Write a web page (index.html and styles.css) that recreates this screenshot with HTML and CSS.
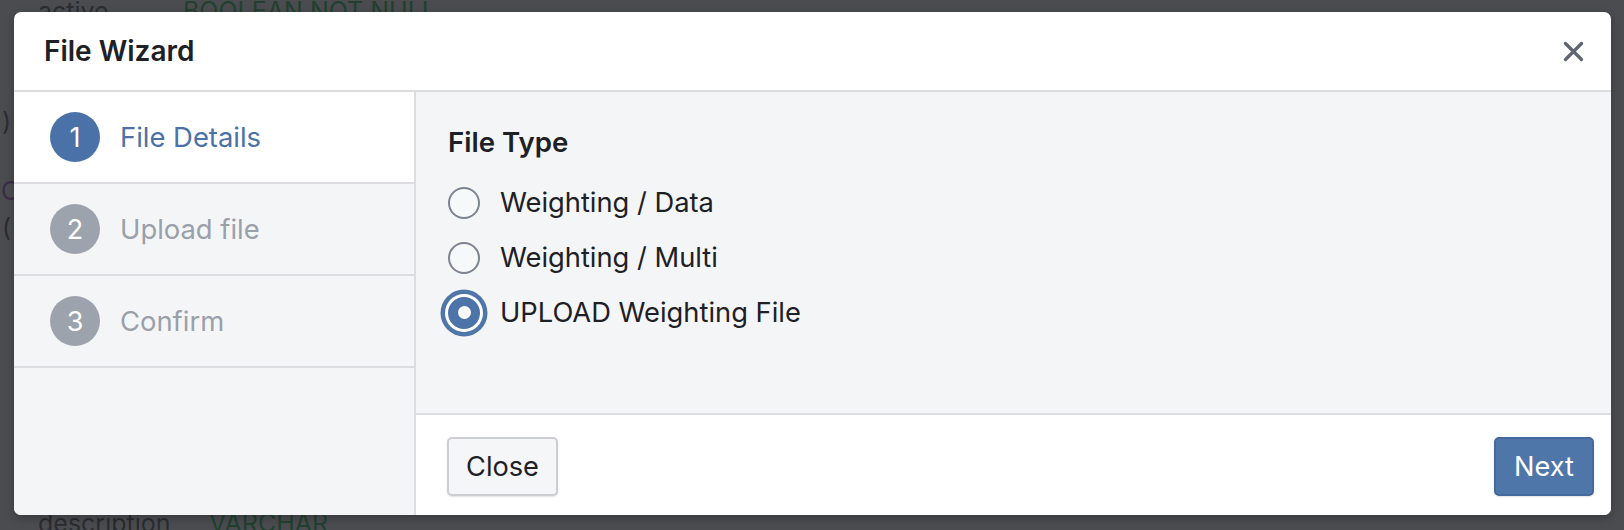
FILE: index.html
```html
<!DOCTYPE html>
<html lang="en">
<head>
<meta charset="utf-8">
<title>File Wizard</title>
<link rel="stylesheet" href="styles.css">
</head>
<body>
<div class="page">
  <div class="line l-top"><span class="col-name">active</span><span class="kw-green">BOOLEAN</span> <span class="kw-green">NOT NULL</span></div>
  <div class="line l-paren1">)</div>
  <div class="line l-c"><span class="kw-purple">C</span></div>
  <div class="line l-paren2">(</div>
  <div class="line l-desc"><span class="col-name">description</span><span class="kw-green">VARCHAR</span></div>
</div>

<div class="modal" role="dialog" aria-labelledby="wizard-title">
  <div class="modal-header">
    <h2 class="modal-title" id="wizard-title">File Wizard</h2>
    <button class="btn-x" aria-label="Close">
      <svg width="21" height="21" viewBox="0 0 21 21" aria-hidden="true">
        <path d="M2.5 2.5 L18.5 18.5 M18.5 2.5 L2.5 18.5" stroke="#5f6671" stroke-width="3.3" stroke-linecap="round" fill="none"/>
      </svg>
    </button>
  </div>
  <div class="modal-body">
    <nav class="steps">
      <div class="step active"><span class="step-num">1</span><span class="step-label">File Details</span></div>
      <div class="step"><span class="step-num">2</span><span class="step-label">Upload file</span></div>
      <div class="step"><span class="step-num">3</span><span class="step-label">Confirm</span></div>
    </nav>
    <div class="main">
      <div class="content">
        <div class="field-label">File Type</div>
        <label class="radio-row"><span class="radio"></span><span class="radio-text">Weighting / Data</span></label>
        <label class="radio-row"><span class="radio"></span><span class="radio-text">Weighting / Multi</span></label>
        <label class="radio-row"><span class="radio checked"></span><span class="radio-text">UPLOAD Weighting File</span></label>
      </div>
      <div class="footer">
        <button class="btn btn-light">Close</button>
        <button class="btn btn-primary">Next</button>
      </div>
    </div>
  </div>
</div>
</body>
</html>
```
FILE: styles.css
```css
* { box-sizing: border-box; }

html, body {
  margin: 0;
  padding: 0;
}

body {
  width: 1624px;
  height: 530px;
  overflow: hidden;
  position: relative;
  background: #4b4c50;
  font-family: Inter, "Noto Sans", sans-serif;
  color: #212529;
}

/* background page (under the backdrop) */
.page {
  color: #2b2c30;
  font-size: 25px;
  line-height: 30px;
}
.line { height: 30px; white-space: nowrap; }
.l-top { margin-top: -4px; padding-left: 38px; }
.l-paren1 { margin-top: 80px; padding-left: 2px; }
.l-c { margin-top: 40px; padding-left: 1px; }
.l-paren2 { margin-top: 6px; padding-left: 2px; }
.l-desc { margin-top: 266px; padding-left: 38px; }
.col-name { display: inline-block; width: 171px; }
.l-top .col-name { width: 145px; }
.kw-green { color: #22402f; }
.kw-purple { color: #3b2c48; }

/* modal */
.modal {
  position: absolute;
  left: 14px;
  top: 12px;
  width: 1597px;
  height: 503px;
  background: #ffffff;
  border-radius: 7px;
  overflow: hidden;
  display: flex;
  flex-direction: column;
  box-shadow: 0 3px 10px rgba(0, 0, 0, 0.25);
}

.modal-header {
  height: 80px;
  flex: 0 0 80px;
  border-bottom: 2px solid #dcdde0;
  display: flex;
  align-items: center;
  justify-content: space-between;
  padding: 0 27px 0 30px;
}

.modal-title {
  margin: 0;
  font-size: 28px;
  font-weight: 600;
  color: #1d2025;
  letter-spacing: 0;
}

.btn-x {
  border: 0;
  background: transparent;
  padding: 0;
  width: 21px;
  height: 21px;
  display: flex;
  cursor: pointer;
}

.modal-body {
  flex: 1;
  display: flex;
  min-height: 0;
}

/* steps */
.steps {
  width: 402px;
  flex: 0 0 402px;
  background: #f4f5f7;
  border-right: 2px solid #dcdde0;
}

.step {
  height: 92px;
  border-bottom: 2px solid #dcdde0;
  display: flex;
  align-items: center;
  gap: 20px;
  padding-left: 36px;
  color: #9aa0a9;
  font-size: 27.4px;
}

.step.active {
  background: #ffffff;
  color: #4a72a8;
}

.step-num {
  width: 50px;
  height: 50px;
  border-radius: 50%;
  background: #9da3ac;
  color: #ffffff;
  display: flex;
  align-items: center;
  justify-content: center;
  font-size: 27px;
}

.step.active .step-num { background: #4a72a8; }

/* main */
.main {
  flex: 1;
  display: flex;
  flex-direction: column;
}

.content {
  flex: 1;
  background: #f4f5f7;
  border-bottom: 2px solid #dcdde0;
  padding: 32px 32px 0 32px;
}

.field-label {
  font-size: 27.6px;
  font-weight: 600;
  line-height: 36px;
  color: #1d2025;
  margin-bottom: 15px;
}

.radio-row {
  display: flex;
  align-items: center;
  gap: 20px;
  height: 55px;
  font-size: 27.3px;
  color: #1d2025;
}

.radio {
  width: 32px;
  height: 32px;
  border-radius: 50%;
  border: 2px solid #7c8490;
  background: #f7f8fa;
  flex: 0 0 32px;
  display: flex;
  align-items: center;
  justify-content: center;
}

.radio.checked {
  background: #4d74a8;
  border-color: #4d74a8;
  box-shadow: 0 0 0 3px #ffffff, 0 0 0 7.5px #4f76a9;
}

.radio.checked::after {
  content: "";
  width: 13px;
  height: 13px;
  border-radius: 50%;
  background: #ffffff;
}

/* footer */
.footer {
  height: 100px;
  flex: 0 0 100px;
  background: #ffffff;
  display: flex;
  align-items: center;
  justify-content: space-between;
  padding: 2px 17px 0 31px;
}

.btn {
  font-family: inherit;
  font-size: 27.2px;
  height: 59px;
  border-radius: 5px;
  border: 2px solid transparent;
  cursor: pointer;
  display: flex;
  align-items: center;
  justify-content: center;
}

.btn-light {
  width: 111px;
  background: #f5f6f8;
  border-color: #cdced1;
  color: #1d2025;
  box-shadow: 0 1px 2px rgba(0, 0, 0, 0.12);
}

.btn-primary {
  width: 100px;
  background: #4e76a9;
  border-color: #44699b;
  color: #ffffff;
  box-shadow: 0 1px 2px rgba(0, 0, 0, 0.12);
}
```
